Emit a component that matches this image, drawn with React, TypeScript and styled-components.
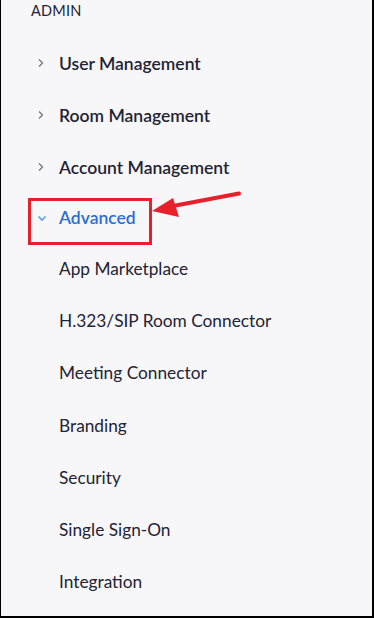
import styled, { createGlobalStyle } from "styled-components";

const GlobalStyle = createGlobalStyle`
  html, body {
    margin: 0;
    padding: 0;
    background: #ffffff;
  }
  * {
    box-sizing: border-box;
  }
`;

const Sidebar = styled.nav`
  position: relative;
  width: 374px;
  height: 618px;
  background-color: #f7f7fa;
  border-left: 1px solid #000;
  border-right: 2px solid #000;
  border-bottom: 2px solid #000;
  font-family: Lato, "Open Sans", sans-serif;
  color: #232333;
  overflow: hidden;
`;

const SectionTitle = styled.div`
  padding: 2px 0 0 30px;
  height: 37px;
  font-size: 14.5px;
  line-height: 18px;
  letter-spacing: 0.2px;
  color: #232333;
`;

const MenuRow = styled.div<{ $height?: number; $active?: boolean }>`
  display: flex;
  align-items: center;
  height: ${({ $height }) => $height ?? 52}px;
  padding-left: 36px;
  font-size: 17.5px;
  font-weight: 600;
  color: ${({ $active }) => ($active ? "#2d6dd2" : "#232333")};
`;

const Chevron = styled.span`
  display: flex;
  width: 22px;
  align-items: center;
`;

const SubRow = styled.div`
  display: flex;
  align-items: center;
  height: 52.3px;
  padding-left: 58px;
  font-size: 17.3px;
  font-weight: 400;
  color: #232333;
`;

const Annotation = styled.svg`
  position: absolute;
  left: 0;
  top: 0;
  pointer-events: none;
`;

const ChevronRight = () => (
  <svg width="8" height="10" viewBox="0 0 8 10">
    <path d="M2 1.5 L5.5 5 L2 8.5" fill="none" stroke="#747487" strokeWidth="1.3" />
  </svg>
);

const ChevronDown = () => (
  <svg width="10" height="8" viewBox="0 0 10 8">
    <path d="M1.5 2.5 L5 6 L8.5 2.5" fill="none" stroke="#5a9be6" strokeWidth="1.6" />
  </svg>
);

const mainItems = ["User Management", "Room Management", "Account Management"];

const subItems = [
  "App Marketplace",
  "H.323/SIP Room Connector",
  "Meeting Connector",
  "Branding",
  "Security",
  "Single Sign-On",
  "Integration",
];

export default function App() {
  return (
    <>
      <GlobalStyle />
      <Sidebar>
        <SectionTitle>ADMIN</SectionTitle>
        {mainItems.map((item) => (
          <MenuRow key={item}>
            <Chevron>
              <ChevronRight />
            </Chevron>
            {item}
          </MenuRow>
        ))}
        <MenuRow $active $height={49}>
          <Chevron>
            <ChevronDown />
          </Chevron>
          Advanced
        </MenuRow>
        {subItems.map((item) => (
          <SubRow key={item}>{item}</SubRow>
        ))}
        <Annotation width="374" height="618" viewBox="0 0 374 618">
          <rect x="28.5" y="199.5" width="121" height="44" fill="none" stroke="#e8202a" strokeWidth="3" />
          <line x1="238" y1="193.5" x2="172" y2="206" stroke="#e8202a" strokeWidth="4" strokeLinecap="round" />
          <polygon points="151,211 172,198 178,217" fill="#e8202a" />
        </Annotation>
      </Sidebar>
    </>
  );
}
